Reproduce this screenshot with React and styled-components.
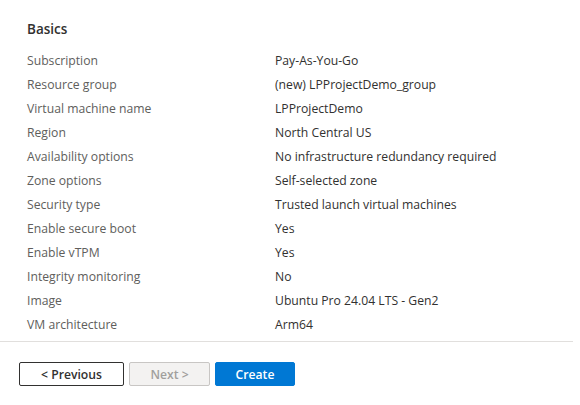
import styled, { createGlobalStyle } from 'styled-components';

const GlobalStyle = createGlobalStyle`
  body { margin: 0; background: #fff; font-family: "Segoe UI", "Open Sans", "Liberation Sans", sans-serif; color: #323130; }
`;

const ROWS = [
  ['Subscription', 'Pay-As-You-Go'],
  ['Resource group', '(new) LPProjectDemo_group'],
  ['Virtual machine name', 'LPProjectDemo'],
  ['Region', 'North Central US'],
  ['Availability options', 'No infrastructure redundancy required'],
  ['Zone options', 'Self-selected zone'],
  ['Security type', 'Trusted launch virtual machines'],
  ['Enable secure boot', 'Yes'],
  ['Enable vTPM', 'Yes'],
  ['Integrity monitoring', 'No'],
  ['Image', 'Ubuntu Pro 24.04 LTS - Gen2'],
  ['VM architecture', 'Arm64'],
];

export default function App() {
  return (
    <Page>
      <GlobalStyle />
      <Summary>
        <Title>Basics</Title>
        <Grid>
          {ROWS.map(([k, v]) => (
            <Row key={k}>
              <Label>{k}</Label>
              <Value>{v}</Value>
            </Row>
          ))}
        </Grid>
      </Summary>
      <Footer>
        <Button $w={105}>&lt; Previous</Button>
        <Button $w={81} disabled>Next &gt;</Button>
        <Button $w={80} $primary>Create</Button>
      </Footer>
    </Page>
  );
}

const Page = styled.div`
  width: 580px;
  height: 405px;
  display: flex;
  flex-direction: column;
`;

const Summary = styled.div`
  padding: 19px 0 0 27px;
  height: 322px;
  border-bottom: 1px solid #e1dfdd;
  margin-right: 7px;
`;

const Title = styled.div`
  font-size: 13.5px;
  font-weight: 600;
  line-height: 20px;
  margin-bottom: 9px;
`;

const Grid = styled.div`
  display: flex;
  flex-direction: column;
`;

const Row = styled.div`
  display: grid;
  grid-template-columns: 248px 1fr;
  height: 24px;
  align-items: center;
  font-size: 12.2px;
`;

const Label = styled.span`
  color: #605e5c;
`;

const Value = styled.span`
  color: #323130;
`;

const Footer = styled.div`
  display: flex;
  gap: 5px;
  padding: 20px 0 0 19px;
`;

const Button = styled.button`
  height: 24px;
  width: ${({ $w }) => $w}px;
  padding: 0;
  font-family: inherit;
  font-size: 12.2px;
  font-weight: 600;
  border-radius: 2px;
  border: 1px solid ${({ $primary, disabled }) => ($primary ? '#0078d4' : disabled ? '#c8c6c4' : '#323130')};
  background: ${({ $primary, disabled }) => ($primary ? '#0078d4' : disabled ? '#f3f2f1' : '#fff')};
  color: ${({ $primary, disabled }) => ($primary ? '#fff' : disabled ? '#a19f9d' : '#323130')};
`;
